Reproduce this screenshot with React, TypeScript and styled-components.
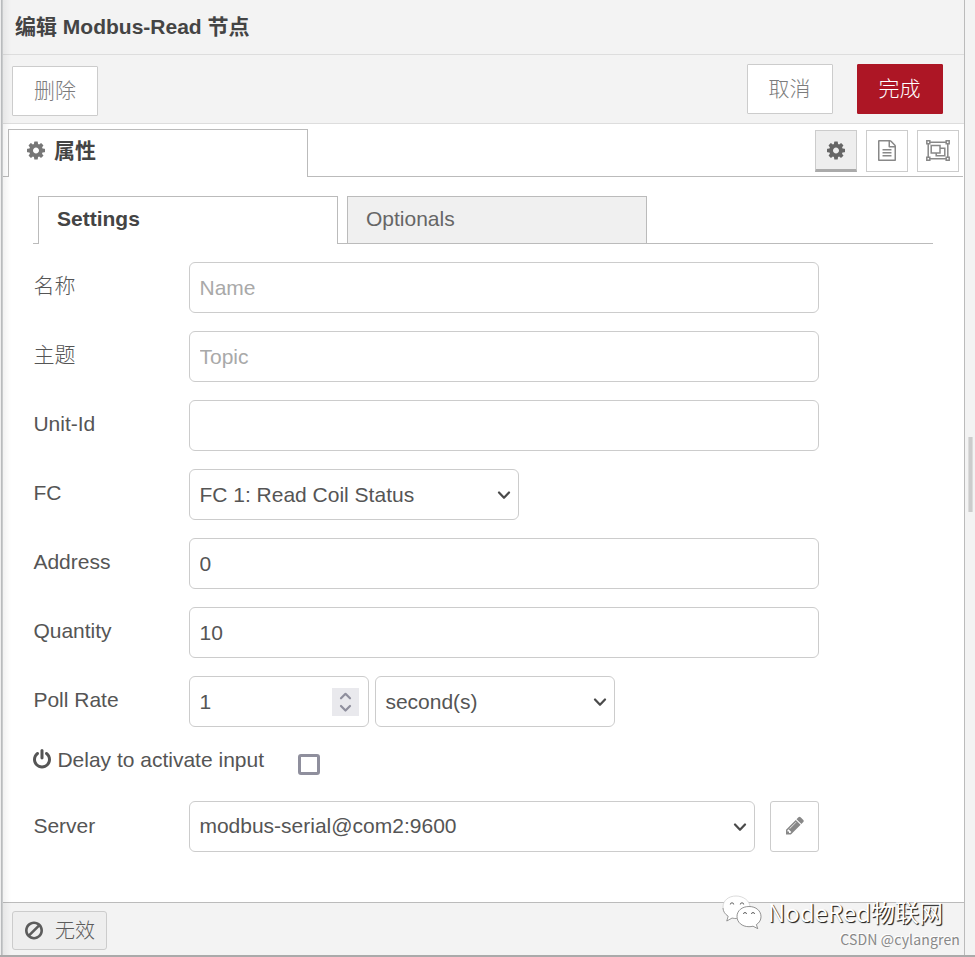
import React from "react";
import styled, { createGlobalStyle, css } from "styled-components";

const GlobalStyle = createGlobalStyle`
  * { box-sizing: border-box; }
  body {
    margin: 0;
    background: #f2f2f2;
    font-family: "Liberation Sans", "Noto Sans CJK SC", sans-serif;
    font-size: 21px;
    line-height: 30px;
    color: #555;
    overflow: hidden;
  }
  button, input, select { font: inherit; color: inherit; margin: 0; }
`;

const Page = styled.div`
  display: flex;
  height: 957px;
  width: 975px;
  background: #f3f3f3;
  border-bottom: 2px solid #aaa;
`;

const Edge = styled.div`
  flex: none;
  width: 3px;
  background: linear-gradient(to right, #eee 0 1px, #b9bbbd 1px 2px, #c9cbcc 2px 3px);
`;

const Panel = styled.main`
  position: relative;
  display: flex;
  flex-direction: column;
  width: 962px;
  background: #fff;
  border-right: 1px solid #bbb;
  &::before {
    content: "";
    position: absolute;
    inset: 0 auto 0 0;
    width: 8px;
    background: linear-gradient(to right, rgba(0, 0, 0, 0.05), transparent);
  }
`;

const Gutter = styled.div`
  display: flex;
  align-items: flex-start;
  width: 10px;
  padding: 437px 0 0 3px;
`;

const Grip = styled.div`
  width: 5px;
  height: 75px;
  background: #ccc;
  border: solid #dcdcdc;
  border-width: 0 1px;
`;

const Header = styled.header`
  flex: none;
  height: 55px;
  padding: 12px 12px 0;
  background: #f3f3f3;
  border-bottom: 1px solid #ddd;
  font-weight: 700;
  color: #444;
`;

const Toolbar = styled.div`
  flex: none;
  display: flex;
  align-items: flex-start;
  height: 69px;
  padding: 9px 21px 0 9px;
  background: #f3f3f3;
  border-bottom: 1px solid #ddd;
`;

const Button = styled.button<{ $primary?: boolean; $low?: boolean; $push?: boolean }>`
  width: 86px;
  height: 50px;
  padding: 0;
  border: 1px solid #ccc;
  border-radius: 1px;
  background: #fff;
  color: #7c7c7c;
  font-weight: 300;
  line-height: 46px;
  ${(p) => p.$low && css`margin-top: 2px;`}
  ${(p) => p.$push && css`margin-left: auto; padding-right: 1px;`}
  ${(p) => p.$primary && css`
    margin-left: 24px;
    padding-right: 1px;
    background: #ad1625;
    border-color: #ad1625;
    color: #fff;
  `}
`;

const PanelTabs = styled.nav`
  flex: none;
  display: flex;
  height: 53px;
  padding-top: 5px;
`;

const TabRule = styled.span<{ $width?: number }>`
  align-self: flex-end;
  height: 1px;
  background: #bbb;
  ${(p) => (p.$width ? css`flex: none; width: ${p.$width}px;` : css`flex: 1;`)}
`;

const PanelTab = styled.div`
  display: flex;
  align-items: flex-start;
  gap: 9px;
  width: 300px;
  height: 48px;
  padding: 6px 18px 0;
  border: 1px solid #bbb;
  border-bottom: 0;
  color: #444;
  font-weight: 700;
  svg { margin-top: 4px; color: #777; }
`;

const TabSide = styled.div`
  flex: 1;
  display: flex;
  justify-content: flex-end;
  gap: 9px;
  padding: 1px 5px 0 0;
  border-bottom: 1px solid #bbb;
  margin-right: 1px;
`;

const IconTab = styled.button<{ $active?: boolean }>`
  display: flex;
  align-items: center;
  justify-content: center;
  width: 42px;
  height: 42px;
  padding: 0 0 2px;
  border: 1px solid #ccc;
  background: #fff;
  color: #888;
  margin-right: -1px;
  & + & { margin-left: 1px; }
  ${(p) => p.$active && css`
    padding: 0;
    background: #eee;
    color: #666;
    border-bottom: 3px solid #aaa;
  `}
`;

const Content = styled.section`
  flex: 1;
  padding: 19px 31px 0 30px;
`;

const FormTabs = styled.nav`
  display: flex;
  height: 48px;
  margin-bottom: 18px;
`;

const FormTab = styled.div<{ $active?: boolean }>`
  width: 300px;
  padding: 7px 18px;
  border: 1px solid #bbb;
  background: #f0f0f0;
  color: #666;
  ${(p) => p.$active && css`
    border-bottom: 0;
    background: #fff;
    color: #444;
    font-weight: 700;
  `}
`;

const Row = styled.div`
  display: flex;
  height: 51px;
  margin-bottom: 18px;
`;

const Label = styled.label<{ $low?: boolean }>`
  width: 156px;
  padding: ${(p) => (p.$low ? 10 : 9)}px 0 0 0.4px;
  font-weight: 300;
`;

const Field = styled.input<{ $width?: number }>`
  width: ${(p) => p.$width ?? 630}px;
  height: 51px;
  padding: 1px 9.5px 0;
  border: 1px solid #ccc;
  border-radius: 6px;
  background: #fff;
  outline: 0;
  appearance: textfield;
  &::placeholder { color: #a9a9a9; opacity: 1; }
  &::-webkit-inner-spin-button { appearance: none; }
`;

const Picker = styled.div<{ $width: number; $raised?: boolean }>`
  position: relative;
  width: ${(p) => p.$width}px;
  height: 51px;
  select {
    width: 100%;
    height: 100%;
    padding: ${(p) => (p.$raised ? "0 30px 1px" : "1px 30px 0")} 9.4px;
    border: 1px solid #ccc;
    border-radius: 6px;
    background: #fff;
    appearance: none;
  }
  svg { position: absolute; right: 8px; top: 22px; }
`;

const NumberBox = styled.div`
  position: relative;
  margin-right: 6px;
`;

const Spinner = styled.span`
  position: absolute;
  right: 10px;
  top: 12px;
  display: flex;
  width: 27px;
  height: 28px;
  background: #e9e9ed;
`;

const CheckRow = styled.div`
  display: flex;
  height: 38px;
  margin-bottom: 18px;
  svg { margin: 4px 6px 0 0; }
`;

const CheckLabel = styled.label`
  display: flex;
  width: 265px;
  padding-left: 0.4px;
`;

const Checkbox = styled.input`
  appearance: none;
  width: 22px;
  height: 21px;
  margin-top: 9px;
  border: 3px solid #8f8f9d;
  border-radius: 3px;
  background: #fff;
`;

const EditButton = styled.button`
  width: 49px;
  height: 51px;
  margin-left: 15px;
  padding: 0 0 2px;
  border: 1px solid #ccc;
  border-radius: 3px;
  background: #fff;
  color: #888;
  display: grid;
  place-items: center;
`;

const Footer = styled.footer`
  flex: none;
  height: 53px;
  padding: 8px 9px;
  border-top: 1px solid #bbb;
  background: #f3f3f3;
`;

const StateButton = styled.button`
  display: flex;
  align-items: center;
  gap: 12px;
  width: 95px;
  height: 39px;
  padding: 0 0 0 12px;
  border: 1px solid #ccc;
  border-radius: 3px;
  background: #eee;
  color: #5c5c5c;
  font-weight: 300;
  font-size: 20px;
  white-space: nowrap;
  svg { flex: none; }
`;

const Watermark = styled.div`
  position: absolute;
  right: 21px;
  bottom: 26px;
  display: flex;
  align-items: center;
  gap: 6px;
  color: #fff;
  font-family: "Noto Sans CJK SC", sans-serif;
  font-size: 24px;
  font-weight: 400;
  line-height: 34px;
  white-space: nowrap;
  text-shadow: 1px 1px 1px #222, 1px 1px 0 #777;
`;

const Credit = styled.div`
  position: absolute;
  right: 4px;
  bottom: 6px;
  color: #888;
  font-family: "Noto Sans CJK SC", sans-serif;
  font-size: 14px;
  font-weight: 400;
  letter-spacing: 0.15px;
  line-height: 20px;
  white-space: nowrap;
  text-shadow: -1px -1px 0 #fff;
`;

const shapes = {
  cog: "M1152 896q0-106-75-181t-181-75-181 75-75 181 75 181 181 75 181-75 75-181zm512-109v222q0 12-8 23t-20 13l-185 28q-19 54-39 91 35 50 107 138 10 12 10 25t-9 23q-27 37-99 108t-94 71q-12 0-26-9l-138-108q-44 23-91 38-16 136-29 186-7 28-36 28h-222q-14 0-24.5-8.5t-11.5-21.5l-28-184q-49-16-90-37l-141 107q-10 9-25 9-14 0-25-11-126-114-165-168-7-10-7-23 0-12 8-23 15-21 51-66.5t54-70.5q-27-50-41-99l-183-27q-13-2-21-12.5t-8-23.5v-222q0-12 8-23t19-13l186-28q14-46 39-92-40-57-107-138-10-12-10-24 0-10 9-23 26-36 98.5-107.5t94.5-71.5q13 0 26 10l138 107q44-23 91-38 16-136 29-186 7-28 36-28h222q14 0 24.5 8.5t11.5 21.5l28 184q49 16 90 37l142-107q9-9 24-9 13 0 25 10 129 119 165 170 7 8 7 22 0 12-8 23-15 21-51 66.5t-54 70.5q26 50 41 98l183 28q13 2 21 12.5t8 23.5z",
  file: "M1596 380q28 28 48 76t20 88v1152q0 40-28 68t-68 28h-1344q-40 0-68-28t-28-68v-1600q0-40 28-68t68-28h896q40 0 88 20t76 48zm-444-244v376h376q-10-29-22-41l-313-313q-12-12-41-22zm384 1528v-1024h-416q-40 0-68-28t-28-68v-416h-768v1536h1280zm-1024-864q0-14 9-23t23-9h704q14 0 23 9t9 23v64q0 14-9 23t-23 9h-704q-14 0-23-9t-9-23v-64zm736 224q14 0 23 9t9 23v64q0 14-9 23t-23 9h-704q-14 0-23-9t-9-23v-64q0-14 9-23t23-9h704zm0 256q14 0 23 9t9 23v64q0 14-9 23t-23 9h-704q-14 0-23-9t-9-23v-64q0-14 9-23t23-9h704z",
  pencil: "M491 1536l91-91-235-235-91 91v107h128v128h107zm523-928q0-22-22-22-10 0-17 7l-542 542q-7 7-7 17 0 22 22 22 10 0 17-7l542-542q7-7 7-17zm-54-192l416 416-832 832h-416v-416zm683 96q0 53-37 90l-166 166-416-416 166-165q36-38 90-38 53 0 91 38l235 234q37 39 37 91z",
  power: "M1664 896q0 156-61 298t-164 245-245 164-298 61-298-61-245-164-164-245-61-298q0-182 80.5-343t226.5-270q43-32 95.5-25t83.5 50q32 42 24.5 94.5t-49.5 84.5q-98 74-151.5 181t-53.5 228q0 104 40.5 198.5t109.5 163.5 163.5 109.5 198.5 40.5 198.5-40.5 163.5-109.5 109.5-163.5 40.5-198.5q0-121-53.5-228t-151.5-181q-42-32-49.5-84.5t24.5-94.5q31-43 84-50t95 25q146 109 226.5 270t80.5 343zm-640-768v640q0 52-38 90t-90 38-90-38-38-90v-640q0-52 38-90t90-38 90 38 38 90z",
  ban: "M1440 893q0-161-87-295l-754 753q137 89 297 89 111 0 211.5-43.5t173.5-116.5 116-174.5 43-212.5zm-999 299l755-754q-135-91-300-91-148 0-273 73t-198 199-73 274q0 162 89 299zm1223-299q0 157-61 300t-163.5 246-245 164-298.5 61-298.5-61-245-164-163.5-246-61-300 61-299.5 163.5-245.5 245-164 298.5-61 298.5 61 245 164 163.5 245.5 61 299.5z",
};

const Icon = ({ name }: { name: keyof typeof shapes }) => (
  <svg width="18" height="21" viewBox="128 0 1536 1792" fill="currentColor">
    <path d={shapes[name]} />
  </svg>
);

const GroupIcon = () => (
  <svg width="24" height="21" viewBox="0 0 24 21" fill="none" stroke="currentColor" strokeWidth="1.5">
    <path d="M4 2.200h16M4 18.800h16M2.200 4v13M21.800 4v13" />
    <path d="M.8.8h3v3h-3zM20.200.8h3v3h-3zM.8 17.200h3v3h-3zM20.200 17.200h3v3h-3z" />
    <path d="M5.200 5.500h8.800v7.500H5.200z" />
    <path d="M14 8.200h4.800v7.600h-8.600v-2.800" />
  </svg>
);

const Chevron = () => (
  <svg width="14" height="9" viewBox="0 0 14 9" fill="none" stroke="#4a4a4a" strokeWidth="2.2" strokeLinecap="round" strokeLinejoin="round">
    <path d="M2 1.500 7 6.800l5-5.300" />
  </svg>
);

const SpinArrows = () => (
  <svg width="27" height="28" viewBox="0 0 27 28" fill="none" stroke="#8f8f9d" strokeWidth="2.2" strokeLinecap="round" strokeLinejoin="round">
    <path d="M9 10.300 13.500 5.800l4.500 4.500M9 18l4.500 4.500L18 18" />
  </svg>
);

const ChatIcon = () => (
  <svg width="40" height="34" viewBox="0 0 40 34">
    <g fill="#fff" strokeWidth=".7">
      <path d="M14 1C6.500 1 1 5.600 1 12c0 4 2 7 5.200 9.200L4.800 26l5.300-3c1.500.4 3 .6 4.500.5C24 23 28 18 28 12S21.500 1 14 1Z" stroke="#ccc" />
      <path d="M1 13c.2 3.500 2 6.200 5.200 8.200L4.800 26l5.300-3c1.500.4 3 .6 4.500.5" stroke="#777" />
      <path d="M27 11.500c-7 0-12 4.200-12 10s5 10.200 12 10.200c1.400 0 2.700-.2 4-.5l4.700 2.400-1.300-4C37.500 27.500 39 25 39 21.700c0-5.900-5-10.200-12-10.200Z" stroke="#666" />
    </g>
    <g fill="#fff" stroke="#555" strokeWidth=".9">
      <path d="M8.300 9.500a1.700 1.700 0 0 1 3.400 0M18.300 9.500a1.700 1.700 0 0 1 3.400 0M21.500 19a1.500 1.500 0 0 1 3 0M29.500 19a1.500 1.500 0 0 1 3 0" />
    </g>
  </svg>
);

const Select = ({ width, value, raised }: { width: number; value: string; raised?: boolean }) => (
  <Picker $width={width} $raised={raised}>
    <select defaultValue={value}>
      <option>{value}</option>
    </select>
    <Chevron />
  </Picker>
);

const textRows = [
  { label: "名称", placeholder: "Name", value: "" },
  { label: "主题", placeholder: "Topic", value: "" },
  { label: "Unit-Id", placeholder: "", value: "" },
];

const rangeRows = [
  { label: "Address", value: "0" },
  { label: "Quantity", value: "10" },
];

export default function App() {
  return (
    <>
      <GlobalStyle />
      <Page>
        <Edge />
        <Panel>
          <Header>编辑 Modbus-Read 节点</Header>
          <Toolbar>
            <Button $low>删除</Button>
            <Button $push>取消</Button>
            <Button $primary>完成</Button>
          </Toolbar>
          <PanelTabs>
            <TabRule $width={5} />
            <PanelTab>
              <Icon name="cog" />
              属性
            </PanelTab>
            <TabSide>
              <IconTab $active><Icon name="cog" /></IconTab>
              <IconTab><Icon name="file" /></IconTab>
              <IconTab><GroupIcon /></IconTab>
            </TabSide>
          </PanelTabs>
          <Content>
            <FormTabs>
              <TabRule $width={5} />
              <FormTab $active>Settings</FormTab>
              <TabRule $width={9} />
              <FormTab>Optionals</FormTab>
              <TabRule />
            </FormTabs>
            {textRows.map((row) => (
              <Row key={row.label}>
                <Label>{row.label}</Label>
                <Field placeholder={row.placeholder} defaultValue={row.value} />
              </Row>
            ))}
            <Row>
              <Label>FC</Label>
              <Select width={330} value="FC 1: Read Coil Status" />
            </Row>
            {rangeRows.map((row) => (
              <Row key={row.label}>
                <Label>{row.label}</Label>
                <Field defaultValue={row.value} />
              </Row>
            ))}
            <Row>
              <Label>Poll Rate</Label>
              <NumberBox>
                <Field type="number" $width={180} defaultValue="1" />
                <Spinner><SpinArrows /></Spinner>
              </NumberBox>
              <Select width={240} value="second(s)" />
            </Row>
            <CheckRow>
              <CheckLabel>
                <Icon name="power" />
                Delay to activate input
              </CheckLabel>
              <Checkbox type="checkbox" />
            </CheckRow>
            <Row>
              <Label $low>Server</Label>
              <Select width={566} value="modbus-serial@com2:9600" raised />
              <EditButton><Icon name="pencil" /></EditButton>
            </Row>
          </Content>
          <Footer>
            <StateButton><Icon name="ban" />无效</StateButton>
          </Footer>
          <Watermark><ChatIcon />NodeRed物联网</Watermark>
          <Credit>CSDN @cylangren</Credit>
        </Panel>
        <Gutter><Grip /></Gutter>
      </Page>
    </>
  );
}
